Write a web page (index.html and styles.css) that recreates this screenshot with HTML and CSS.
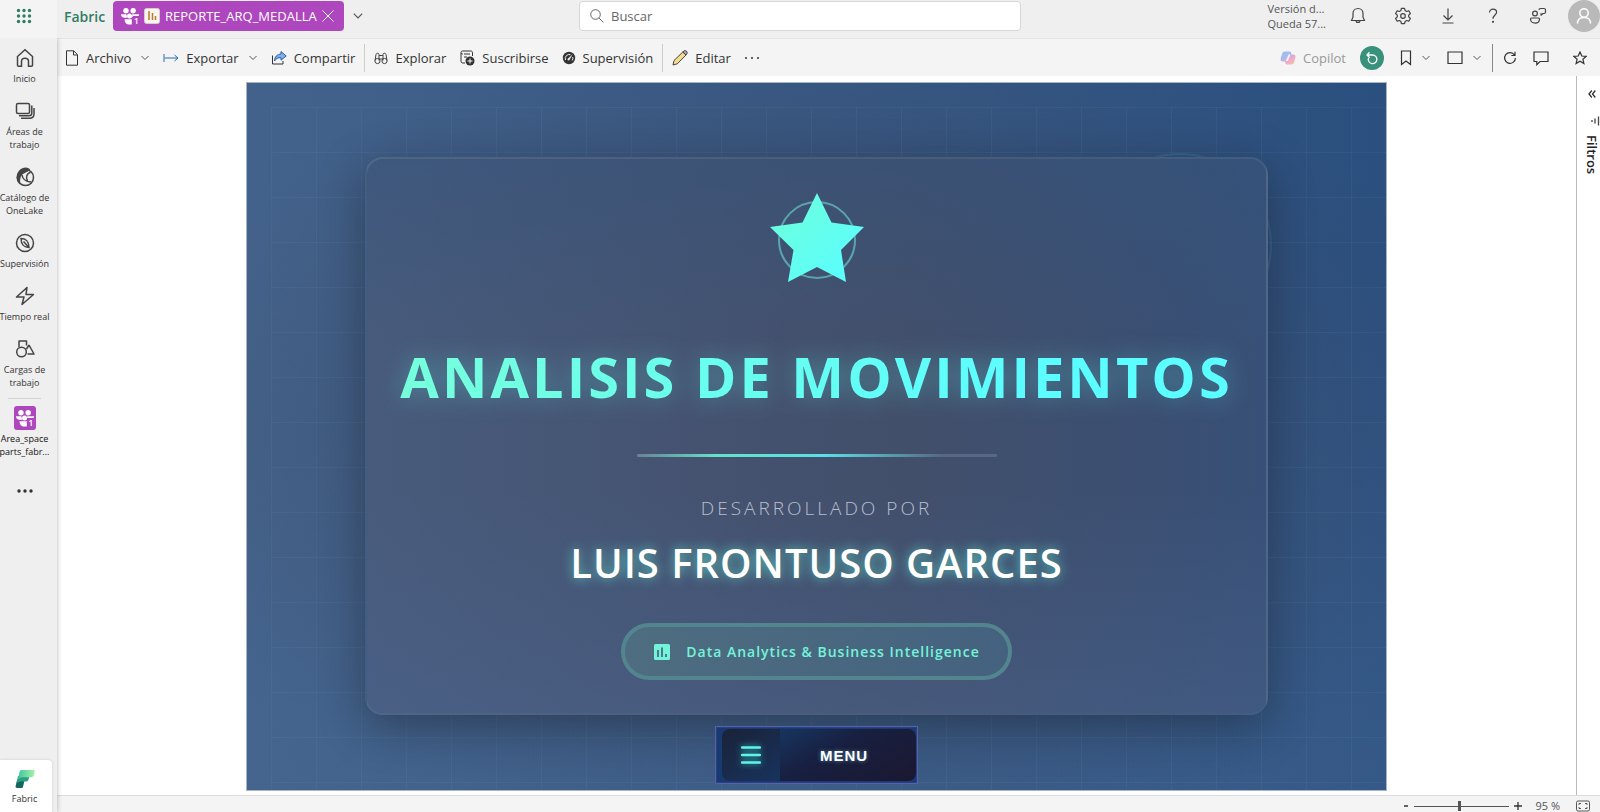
FILE: index.html
```html
<!DOCTYPE html>
<html lang="es">
<head>
<meta charset="utf-8">
<title>REPORTE_ARQ_MEDALLA</title>
<link rel="stylesheet" href="styles.css">
</head>
<body>
<svg class="defs" aria-hidden="true">
  <symbol id="chevron" viewBox="0 0 10 10"><path d="M1.500 3 5 6.500 8.500 3" fill="none" stroke="currentColor"/></symbol>
  <symbol id="people" viewBox="0 0 20 20">
    <g fill="#fff"><circle cx="5.500" cy="4.200" r="3"/><circle cx="13.500" cy="4.200" r="3"/><circle cx="9.500" cy="10" r="2.800"/>
    <path d="M0 8h6l.8 4H4C1.500 12 0 10.300 0 8zM12.500 8H20c0 2-1 3.200-3 3.200h-4.500zM4 13.500h8v6H9.500C6 19.500 4 17 4 13.500z"/></g>
  </symbol>
</svg>
<div class="app">
  <header class="topbar">
    <button class="waffle" aria-label="Aplicaciones">
      <svg width="16" height="16" viewBox="0 0 16 16" fill="#2f7d65"><circle cx="2.500" cy="2.500" r="1.700"/><circle cx="8" cy="2.500" r="1.700"/><circle cx="13.500" cy="2.500" r="1.700"/><circle cx="2.500" cy="8" r="1.700"/><circle cx="8" cy="8" r="1.700"/><circle cx="13.500" cy="8" r="1.700"/><circle cx="2.500" cy="13.500" r="1.700"/><circle cx="8" cy="13.500" r="1.700"/><circle cx="13.500" cy="13.500" r="1.700"/></svg>
    </button>
    <div class="top-left">
      <a class="brand" href="#">Fabric</a>
      <div class="tab">
        <span class="people"><svg width="18" height="18"><use href="#people"/></svg><b>1</b></span>
        <svg width="16" height="16" viewBox="0 0 16 16"><rect x=".5" y=".5" width="15" height="15" rx="2" fill="#faf6ef" stroke="#d8cdd0"/><path d="M5 3v9M8.500 5v7M11.500 8v4" stroke="#b97a2c" stroke-width="1.500"/></svg>
        <span class="tab-name">REPORTE_ARQ_MEDALLA</span>
        <button aria-label="Cerrar"><svg width="12" height="12" viewBox="0 0 12 12"><path d="M.5.5l11 11M11.500.5l-11 11" stroke="#fff"/></svg></button>
      </div>
      <button class="more-tabs" aria-label="Más pestañas"><svg width="12" height="12"><use href="#chevron"/></svg></button>
    </div>
    <label class="search">
      <svg width="14" height="14" viewBox="0 0 14 14" fill="none" stroke="#666"><circle cx="5.500" cy="5.500" r="4.800"/><path d="M9 9l4.500 4.500"/></svg>
      <input type="text" placeholder="Buscar" aria-label="Buscar">
    </label>
    <div class="top-right">
      <p class="trial">Versión d...<br>Queda 57...</p>
      <button aria-label="Notificaciones"><svg width="16" height="18" viewBox="0 0 16 18" fill="none" stroke="#444" stroke-width="1.200"><path d="M8 1.500c-3 0-5 2.300-5 5v3.700L1.500 13.500h13L13 10.200V6.500c0-2.700-2-5-5-5zM6 13.500c0 2.600 4 2.600 4 0"/></svg></button>
      <button aria-label="Configuración"><svg width="18" height="18" viewBox="0 0 18 18" fill="none" stroke="#444" stroke-width="1.200"><path d="M7.400 1.300h3.200l.5 2.300 1.500.9 2.200-.8 1.600 2.800-1.700 1.600v1.800l1.700 1.600-1.600 2.800-2.200-.8-1.500.9-.5 2.300H7.400l-.5-2.300-1.500-.9-2.200.8-1.600-2.800 1.700-1.600V8.100L1.600 6.500l1.600-2.800 2.200.8 1.500-.9z" stroke-linejoin="round"/><circle cx="9" cy="9" r="2.300"/></svg></button>
      <button aria-label="Descargar"><svg width="14" height="16" viewBox="0 0 14 16" fill="none" stroke="#444" stroke-width="1.200"><path d="M7 .5v11M2.500 7.500 7 12l4.500-4.500M1.500 15h11"/></svg></button>
      <button aria-label="Ayuda"><svg width="12" height="16" viewBox="0 0 12 16" fill="none" stroke="#444" stroke-width="1.200"><path d="M2.500 4.500C2.500 2.500 4 1.200 6 1.200s3.600 1.300 3.600 3.100C9.600 7 6 7.200 6 10.800"/><circle cx="6" cy="13.800" r=".5"/></svg></button>
      <button aria-label="Comentarios"><svg width="18" height="18" viewBox="0 0 18 18" fill="none" stroke="#444" stroke-width="1.200"><circle cx="6" cy="6.500" r="2.400"/><path d="M2.500 11h7c.8 0 1 .5 1 1 0 5.500-9 5.500-9 0 0-.5.2-1 1-1zM10 3c0-1 .5-1.500 1.500-1.500h3.500c1 0 1.500.5 1.500 1.500v2c0 1-.5 1.500-1.500 1.500h-1l-2 1.700V6.300" stroke-linejoin="round"/></svg></button>
      <button class="avatar" aria-label="Cuenta"><svg width="16" height="18" viewBox="0 0 16 18" fill="none" stroke="#fff" stroke-width="1.500"><circle cx="8" cy="6" r="4.200"/><path d="M1.500 16.500c0-4 2.500-6 6.500-6s6.500 2 6.500 6"/></svg></button>
    </div>
  </header>

  <nav class="rail">
    <a href="#"><svg width="20" height="20" viewBox="0 0 20 20"><path d="M2.500 8.500 10 1.800l7.500 6.700v8.700c0 .6-.4 1-1 1h-3v-5c0-2-1.300-3-3.500-3s-3.500 1-3.500 3v5h-3c-.6 0-1-.4-1-1z"/></svg><span>Inicio</span></a>
    <a href="#"><svg width="20" height="20" viewBox="0 0 20 20"><rect x="1.500" y="2.500" width="13" height="10" rx="1.500"/><path d="M4 14.800h10c1.700 0 2.800-1 2.800-2.800V4.500M6 17.200h8.500c3 0 4.500-1.500 4.500-4.500V7" /></svg><span>Áreas de<br>trabajo</span></a>
    <a href="#"><svg width="20" height="20" viewBox="0 0 20 20"><circle cx="10.500" cy="10.500" r="8"/><path d="M14 2.500C10 0 6 2 4 5c-2.500 3.500-2.500 8 .5 11C4 12 5 8.500 7.500 6.500 9.500 5 12 4.800 14 2.500z" fill="#444"/><path d="M7 8c.5 3.500 3 6.500 9 7M15.500 5C11.500 7 10.500 10 12.500 14"/></svg><span>Catálogo de<br>OneLake</span></a>
    <a href="#"><svg width="20" height="20" viewBox="0 0 20 20"><circle cx="10" cy="10" r="8.500"/><path d="M6 5.500c4.500 0 8 3 8 9-4.500 0-8-3-8-9zM8.500 8.500l5 5.500"/></svg><span>Supervisión</span></a>
    <a href="#"><svg width="20" height="20" viewBox="0 0 20 20"><path d="M12 1.500 1.500 11H9l-2 7.500L18.500 8.500H11z" stroke-linejoin="round"/></svg><span>Tiempo real</span></a>
    <a href="#"><svg width="20" height="20" viewBox="0 0 20 20"><path d="M4 8V2h7.500v4.500M14 6l5 9h-6.500M14 6l-2.500 4" stroke-linejoin="round"/><circle cx="6.500" cy="13" r="4.800"/></svg><span>Cargas de<br>trabajo</span></a>
    <a class="workspace" href="#"><i class="people"><svg width="18" height="18"><use href="#people"/></svg><b>1</b></i><span>Area_space<br>parts_fabr...</span></a>
    <button class="rail-more" aria-label="Más"><svg width="16" height="4" viewBox="0 0 16 4"><circle cx="2" cy="2" r="1.700"/><circle cx="8" cy="2" r="1.700"/><circle cx="14" cy="2" r="1.700"/></svg></button>
    <a class="fabric" href="#"><svg width="22" height="22" viewBox="0 0 22 22">
      <defs><linearGradient id="fg" x1="0" x2="1"><stop offset="0" stop-color="#3fc4a2"/><stop offset="1" stop-color="#a5f3a6"/></linearGradient></defs>
      <path d="M3 12.500h7.500l-1.500 6.200c-.3 1-1 1.300-2 1.300H3.300c-1.400 0-2-.8-1.700-2z" fill="#11665e"/>
      <path d="M4 8h11.500l-1 3.500c-.4 1.400-1.300 2-2.700 2H6L2.500 15z" fill="#2d9d83"/>
      <path d="M7.500 2H21l-1.200 5c-.4 1.500-1.200 2.200-2.800 2.200H8L4 11l1.500-7c.3-1.300.8-2 2-2z" fill="url(#fg)"/></svg><span>Fabric</span></a>
  </nav>

  <div class="toolbar">
    <button><svg width="14" height="16" viewBox="0 0 14 16" fill="none" stroke="#333"><path d="M1.500.8h7.200l3.800 3.800v10.600h-11zM8.500 1v4h4"/></svg>Archivo<svg class="chev" width="10" height="10"><use href="#chevron"/></svg></button>
    <button><svg width="16" height="10" viewBox="0 0 16 10" fill="none" stroke="#2b6cb5"><path d="M1 1v8M1.500 5H15M11.500 2 15 5l-3.500 3"/></svg>Exportar<svg class="chev" width="10" height="10"><use href="#chevron"/></svg></button>
    <button><svg width="16" height="16" viewBox="0 0 16 16"><path d="M1.500 5.500V14h10.500v-3" fill="none" stroke="#333"/><path d="M10 1.500 15.200 6 10 10.200V7.700C7 7.500 5 8.500 3.500 11c0-4 2.500-6.700 6.500-7z" fill="#7db2e8" stroke="#2b5f9e"/></svg>Compartir</button>
    <i class="sep"></i>
    <button><svg width="14" height="14" viewBox="0 0 14 14" fill="none" stroke="#444"><circle cx="3.500" cy="10" r="2.600"/><circle cx="10.500" cy="10" r="2.600"/><path d="M1 9.500 2 3.500C2.300 1.800 5 1.800 5 3.500v6M13 9.500l-1-6C11.700 1.800 9 1.800 9 3.500v6M5 4.500h4M5 8h4"/></svg>Explorar</button>
    <button><svg width="16" height="16" viewBox="0 0 16 16" fill="none" stroke="#333"><path d="M13.500 6V2.800c0-1.200-.6-1.800-1.800-1.800H3.500C1.500 1 1.500 4 3.500 4H4M2 3v8c0 1.300.6 2 2 2h2M5 4h6M5 7h3"/><circle cx="11" cy="11" r="4.500" fill="#333" stroke="none"/><path d="M11 8.500v5M8.500 11h5" stroke="#fff"/></svg>Suscribirse</button>
    <button><svg width="14" height="14" viewBox="0 0 14 14"><circle cx="7" cy="7" r="6.200" fill="#333"/><path d="M3.500 9a4 4 0 0 1 5-5.300M10.700 6a4 4 0 0 1-.5 3.500" fill="none" stroke="#eee"/><path d="M10.500 3.500 7.500 9C6.500 10 5 9 5.700 7.700z" fill="#eee"/></svg>Supervisión</button>
    <i class="sep"></i>
    <button><svg width="16" height="16" viewBox="0 0 16 16"><path d="M2 10.500 10.800 2l3.200 3L5.300 13.800 1 15z" fill="#f3dc8c" stroke="#444"/><path d="m10.800 2 1.400-1.200c1.800-.8 3.500 1 2.800 2.800L14 5z" fill="#b9a0c2" stroke="#444"/></svg>Editar</button>
    <button aria-label="Más opciones"><svg width="16" height="4" viewBox="0 0 16 4" fill="#333"><circle cx="2" cy="2" r="1"/><circle cx="8" cy="2" r="1"/><circle cx="14" cy="2" r="1"/></svg></button>
    <div class="tools-right">
      <button class="copilot" disabled><svg width="16" height="16" viewBox="0 0 16 16"><defs><linearGradient id="cp" x2=".8" y2="1"><stop offset="0" stop-color="#8dc8f0"/><stop offset=".4" stop-color="#a9b9ee"/><stop offset=".7" stop-color="#eda9cf"/><stop offset="1" stop-color="#f7c09c"/></linearGradient></defs><path d="M5 1.500h4.500c1.500 0 1.700 1.500 2 3h1.700c1.800 0 2.600 1.200 2.200 3l-1.200 4.500c-.5 1.700-1.200 2.500-2.700 2.500H7c-1.500 0-1.700-1.500-2-3H3C1 11.500.2 10.300.7 8.500L2 4c.5-1.700 1.400-2.500 3-2.500z" fill="url(#cp)"/><path d="M8.500 4.500h2L7.800 11h-2z" fill="#f4f4f4"/></svg>Copilot</button>
      <button class="reset" aria-label="Restablecer"><svg width="14" height="14" viewBox="0 0 14 14" fill="none" stroke="#fff" stroke-width="1.300"><path d="M2 4h5.500a4.300 4.300 0 1 1-4 3M4.500 1.200 2 4l2.700 2.700"/></svg></button>
      <button aria-label="Marcadores"><svg width="12" height="16" viewBox="0 0 12 16" fill="none" stroke="#333" stroke-width="1.200"><path d="M1.500 1h9v13.500L6 11l-4.500 3.500z"/></svg><svg class="chev" width="10" height="10"><use href="#chevron"/></svg></button>
      <button aria-label="Ver"><svg width="16" height="14" viewBox="0 0 16 14" fill="none" stroke="#333" stroke-width="1.200"><path d="M1 1h14v11.500H1z"/></svg><svg class="chev" width="10" height="10"><use href="#chevron"/></svg></button>
      <i class="sep dark"></i>
      <button aria-label="Actualizar"><svg width="14" height="14" viewBox="0 0 14 14" fill="none" stroke="#333" stroke-width="1.200"><path d="M11.500 4A5.400 5.400 0 1 0 12.400 7M12 .8V4.500H8.300"/></svg></button>
      <button aria-label="Comentar"><svg width="16" height="15" viewBox="0 0 16 15" fill="none" stroke="#333" stroke-width="1.200"><path d="M1 1h14v9.500H7L3.800 13.700v-3.200H1z"/></svg></button>
      <button class="fav" aria-label="Favorito"><svg width="14" height="14" viewBox="0 0 14 14" fill="none" stroke="#333" stroke-width="1.200"><path d="m7 1 1.800 4 4.400.4-3.300 2.900 1 4.300L7 10.300l-3.900 2.300 1-4.300L.8 5.400 5.200 5z"/></svg></button>
    </div>
  </div>

  <main class="stage">
    <section class="report">
      <div class="card">
        <svg class="star" width="94" height="92" viewBox="0 0 94 92">
          <defs><linearGradient id="sg" x1="0" y1="0" x2="1" y2="1"><stop offset=".1" stop-color="#6cffdc"/><stop offset=".8" stop-color="#5cfdfa"/></linearGradient></defs>
          <circle cx="47" cy="47" r="38" fill="none" stroke="#5aa5ad" stroke-width="2"/>
          <path d="M47 0 61.500 29.500 94 34 71 57 76 89 47 74 18 89 23.500 57 0 34 32.500 29.500z" fill="url(#sg)"/>
        </svg>
        <h1>ANALISIS DE MOVIMIENTOS</h1>
        <div class="rule"></div>
        <p class="by">DESARROLLADO POR</p>
        <h2>LUIS FRONTUSO GARCES</h2>
        <div class="badge"><svg width="18" height="18" viewBox="0 0 18 18"><rect x="1" y="1" width="16" height="16" rx="1.500" fill="#74f3da"/><path d="M5 7v7M9 4.500V14M13 11v3" stroke="#47707f" stroke-width="1.800"/></svg>Data Analytics &amp; Business Intelligence</div>
      </div>
      <button class="menu"><span class="burger"><svg width="20" height="18" viewBox="0 0 20 18"><path d="M1 1.500h18M1 9h18M1 16.500h18" stroke="#62f5e6" stroke-width="2.400" stroke-linecap="round"/></svg></span><span class="menu-text">MENU</span></button>
    </section>
  </main>

  <aside class="filters">
    <button aria-label="Expandir"><svg width="8" height="8" viewBox="0 0 8 8" fill="none" stroke="#333" stroke-width="1.300"><path d="M3.800.5 1 4l2.800 3.500M7.300.5 4.500 4l2.800 3.500"/></svg></button>
    <svg width="10" height="10" viewBox="0 0 10 10" stroke="#444" stroke-width="1.300"><path d="M2 4v2M5 2.500v5M8.500.5v9"/></svg>
    <span>Filtros</span>
  </aside>

  <footer class="status">
    <button aria-label="Alejar"><svg width="6" height="8" viewBox="0 0 6 8"><path d="M1 4h4" stroke="#333" stroke-width="1.500"/></svg></button>
    <input type="range" min="0" max="100" value="47" aria-label="Zoom">
    <button aria-label="Acercar"><svg width="8" height="8" viewBox="0 0 8 8"><path d="M0 4h8M4 0v8" stroke="#333" stroke-width="1.300"/></svg></button>
    <span>95 %</span>
    <button aria-label="Ajustar a la página"><svg width="14" height="12" viewBox="0 0 14 12" fill="none" stroke="#555"><rect x=".5" y="1" width="13" height="10" rx="1.500"/><path d="M3 5V3.500h2M9 3.500h2V5M11 7v1.500H9M5 8.500H3V7"/></svg></button>
  </footer>
</div>
</body>
</html>
```
FILE: styles.css
```css
* { box-sizing: border-box; }
body { margin: 0; font-family: "Open Sans", "Noto Sans", sans-serif; font-size: 13px; color: #333; background: #fff; }
button { border: 0; padding: 0; background: none; font: inherit; color: inherit; display: flex; align-items: center; }
a { color: inherit; text-decoration: none; }
p, h1, h2 { margin: 0; }
svg { flex: none; display: block; }
.defs { position: absolute; width: 0; height: 0; }

.app {
  display: grid;
  height: 100vh;
  grid-template: 38px 38px 1fr 17px / 57px 1fr 24px;
  grid-template-areas: "top top top" "rail tools tools" "rail stage filters" "rail status status";
  overflow: hidden;
}

.topbar { grid-area: top; display: grid; grid-template-columns: 57px 1fr 442px calc(50% - 221px); background: #efefef; }
.waffle { justify-content: center; padding: 0 10px 6px 0; background: #f4f4f4; }
.top-left { display: flex; align-items: center; padding: 0 0 6px 7px; }
.brand { width: 49px; font-size: 14px; font-weight: 600; color: #2f7d65; }
.tab { display: flex; align-items: center; width: 231px; height: 30px; padding: 0 10px 0 8px; border-radius: 4px; background: #ae46bd; color: #fff; }
.people { position: relative; display: block; width: 18px; height: 18px; }
.people b { position: absolute; right: 0; bottom: 0; padding-left: 1px; font-size: 9px; line-height: 9px; font-weight: 600; font-style: normal; color: #fff; background: #ae46bd; }
.tab .people { margin-right: 5px; }
.tab-name { flex: 1; padding-left: 5px; white-space: nowrap; }
.more-tabs { margin-left: 8px; color: #555; }
.search { display: flex; align-items: center; gap: 7px; height: 30px; margin-top: 1px; padding: 0 10px; border: 1px solid #d6d6d6; border-radius: 4px; background: #fff; }
.search input { flex: 1; min-width: 0; border: 0; padding: 0; outline: 0; font: inherit; background: none; }
.search input::placeholder { color: #666; opacity: 1; }
.top-right { display: flex; align-items: center; justify-content: flex-end; padding-bottom: 6px; }
.top-right button { justify-content: center; width: 45px; }
.trial { font-size: 11px; line-height: 15px; color: #555; margin-right: 9px; white-space: nowrap; }
.top-right .avatar { width: 32px; height: 32px; margin-left: 8px; border-radius: 50%; background: #b9b9b9; }

.rail { grid-area: rail; z-index: 1; display: flex; flex-direction: column; padding-top: 10px; background: #efefef; box-shadow: 0 0 5px rgba(0,0,0,.3); clip-path: inset(0 -8px 0 0); font-size: 9px; line-height: 13px; }
.rail a { display: flex; flex-direction: column; align-items: center; gap: 4px; width: 49px; margin-bottom: 16px; text-align: center; white-space: nowrap; }
.rail svg { fill: none; stroke: #444; stroke-width: 1.500px; }
.rail .workspace { position: relative; margin: 1px 0 0; gap: 2px; font-weight: 500; color: #111; }
.workspace::before { content: ""; position: absolute; top: -8px; left: 8px; right: 8px; height: 1px; background: #d2d2d2; }
.workspace .people { width: 22px; height: 24px; padding: 3px 2px; border-radius: 3px; background: #ae46bd; }
.workspace .people b { right: 2px; bottom: 3px; }
.rail .people svg, .rail .rail-more svg, .rail .fabric svg { stroke: none; }
.rail .rail-more { justify-content: center; width: 49px; margin-top: 31px; }
.rail .rail-more svg { fill: #333; }
.rail .fabric { width: 52px; height: 52px; margin: auto 0 0; padding: 8px 3px 0 0; gap: 2px; border-radius: 0 4px 0 0; background: #fff; box-shadow: 0 0 3px rgba(0,0,0,.15); }

.toolbar { grid-area: tools; display: flex; align-items: center; gap: 13px; padding: 1px 13px 0 8px; background: #f4f4f4; border-top: 1px solid #e4e4e4; white-space: nowrap; }
.toolbar button { gap: 7px; }
.toolbar .chev { color: #555; margin-left: 2px; }
.sep { width: 1px; height: 28px; margin: 0 -4px; background: #ccc; }
.sep.dark { background: #888; margin: 0 -6px; }
.tools-right { display: flex; align-items: center; gap: 16px; margin-left: auto; }
.copilot { color: #999; margin-right: -2px; }
.toolbar .reset { justify-content: center; width: 24px; height: 24px; border-radius: 50%; background: #38917b; }
.fav { margin-left: 8px; }

.stage { grid-area: stage; min-height: 0; min-width: 0; display: flex; justify-content: center; padding: 6px 0 4px; }
.report {
  position: relative; display: flex; flex-direction: column; align-items: center; gap: 11px;
  height: 100%; aspect-ratio: 1141 / 709; padding: 74px 118px 6px;
  border: 1px solid #a7b5c8;
  background:
    radial-gradient(ellipse 60% 60% at 50% 50%, rgba(64,70,92,.6), rgba(64,70,92,0)),
    linear-gradient(170deg, rgba(62,92,136,0) 40%, rgba(78,112,156,.3)),
    linear-gradient(to right, #43628b, #2b4f7e);
}
.report::before {
  content: ""; position: absolute; inset: 24px 0 0 24px;
  background:
    linear-gradient(to right, rgba(120,190,210,.07) 1px, transparent 1px) 0 0 / 45px 45px,
    linear-gradient(rgba(120,190,210,.07) 1px, transparent 1px) 0 0 / 45px 45px;
}
.report::after { content: ""; position: absolute; top: 70px; right: 114px; width: 180px; height: 180px; border: 2px solid rgba(100,210,200,.14); border-radius: 50%; }
.card {
  position: relative; z-index: 1; flex: 1; align-self: stretch; display: flex; flex-direction: column; align-items: center;
  padding-top: 34px; border: 2px solid rgba(130,165,190,.15); border-radius: 18px;
  background:
    linear-gradient(to bottom, rgba(50,84,126,.45), rgba(50,84,126,0) 35%),
    linear-gradient(to bottom, rgba(74,100,142,0) 60%, rgba(74,100,142,.45)),
    linear-gradient(to right, #485b7c, #44516e 45%, #424f6b 60%, #3a4f73 90%, #385077);
  background-clip: padding-box, padding-box, border-box;
  box-shadow: 0 12px 45px rgba(20,26,36,.42);
  white-space: nowrap;
}
.card h1 { margin-top: 56px; font-size: 56px; line-height: 70px; font-weight: 700; letter-spacing: 3px; background: linear-gradient(100deg, #76ffdc, #5cfdff 75%); -webkit-background-clip: text; background-clip: text; color: transparent; filter: drop-shadow(0 0 12px rgba(90,230,225,.4)); }
.rule { width: 360px; height: 3px; margin-top: 43px; border-radius: 2px; background: linear-gradient(to right, rgba(120,150,165,.7), #62e3c6 22%, #5adfe8 52%, rgba(100,120,145,.6) 85%); }
.by { margin-top: 37px; font-size: 19px; line-height: 28px; font-weight: 300; letter-spacing: 3px; color: #b8bfcd; }
.card h2 { margin-top: 13px; font-size: 40px; line-height: 56px; font-weight: 600; letter-spacing: 1px; color: #fff; text-shadow: 0 0 12px rgba(100,240,215,.75); }
.badge { display: flex; align-items: center; gap: 15px; height: 57px; margin-top: 32px; padding: 0 28px; border: 4px solid #53858f; border-radius: 29px; background: linear-gradient(to right, #4e6d80, #44627f); color: #74f3da; font-size: 14px; font-weight: 600; letter-spacing: 1px; }
.menu { position: relative; z-index: 1; width: 203px; height: 58px; flex: none; padding-left: 5px; border: 2px solid #2f3d88; outline: 1px solid #5364a5; outline-offset: -1px; background: #173b6e; }
.menu span { display: flex; align-items: center; justify-content: center; height: 52px; }
.burger { width: 58px; border-radius: 8px 0 0 8px; background: linear-gradient(150deg, #1a2238, #18335d); }
.burger svg { filter: drop-shadow(0 0 3px #2cc8c8); }
.menu-text { flex: 1; border-radius: 0 8px 8px 0; padding-right: 8px; background: linear-gradient(150deg, #17355e, #181f40 40%, #1b1830); color: #fff; font: 700 15px "Liberation Sans", sans-serif; letter-spacing: 1px; text-shadow: 0 0 4px rgba(120,200,220,.6); }

.filters { grid-area: filters; display: flex; flex-direction: column; align-items: center; gap: 9px; padding: 14px 0 0 6px; border-left: 1px solid #bbb; background: #fff; }
.filters svg { margin-bottom: 9px; }
.filters > svg { margin: 0; align-self: flex-end; }
.filters span { writing-mode: vertical-rl; font-size: 13px; line-height: 16px; font-weight: 600; color: #222; }

.status { grid-area: status; display: flex; align-items: center; justify-content: flex-end; padding: 4px 10px 0 0; background: #f4f4f4; border-top: 1px solid #dcdcdc; font-size: 11px; line-height: 12px; color: #555; }
.status input { appearance: none; width: 95px; height: 10px; margin: 0 5px; background: linear-gradient(#555, #555) center / 100% 1px no-repeat; }
.status input::-webkit-slider-thumb { appearance: none; width: 3px; height: 10px; background: #555; }
.status span { margin: 0 16px 0 13px; }
```
